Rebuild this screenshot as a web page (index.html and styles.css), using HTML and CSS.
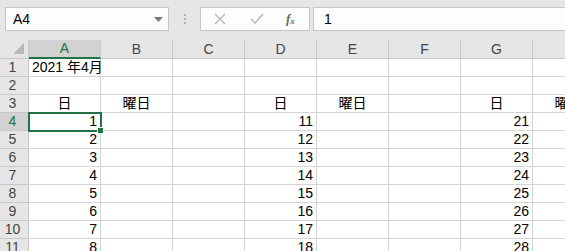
FILE: index.html
```html
<!DOCTYPE html>
<html lang="ja">
  <head>
    <meta charset="UTF-8" />
    <title>Book1 - Excel</title>
    <link rel="stylesheet" href="styles.css">
  </head>
  <body>
    <div class="formula-bar">
      <div class="name-box">
        <span>A4</span>
        <svg class="caret" width="9" height="5" viewBox="0 0 9 5"><path d="M0 0h9L4.5 5z" fill="#7a7a7a"/></svg>
      </div>
      <div class="grip"><i></i><i></i><i></i></div>
      <div class="fx-buttons">
        <svg width="12" height="12" viewBox="0 0 12 12"><path d="M1 1l10 10M11 1L1 11" stroke="#b4b4b4" stroke-width="1.3"/></svg>
        <svg width="14" height="12" viewBox="0 0 14 12"><path d="M1 6l4 4 8-9" stroke="#b4b4b4" stroke-width="1.4" fill="none"/></svg>
        <span class="fx">f<sub>x</sub></span>
      </div>
      <div class="formula-input">1</div>
    </div>

    <div class="sheet" id="sheet"></div>

    <script>
      var cols = ["A", "B", "C", "D", "E", "F", "G", "H"];
      var sheet = document.getElementById("sheet");
      var html = '<div class="corner"><span class="tri"></span></div>';
      cols.forEach(function (c) {
        // column H is scrolled past the window edge, its letter is not seen
        html += '<div class="col-head' + (c === "A" ? " sel" : "") + '">' + (c === "H" ? "" : c) + '</div>';
      });
      for (var r = 1; r <= 11; r++) {
        html += '<div class="row-head' + (r === 4 ? " sel" : "") + '">' + r + '</div>';
        cols.forEach(function (c) {
          var text = "", cls = "cell";
          if (r === 1 && c === "A") { text = "2021 年4月"; cls += " left"; }
          if (r === 3) {
            if (c === "A" || c === "D" || c === "G") { text = "日"; cls += " center"; }
            if (c === "B" || c === "E" || c === "H") { text = "曜日"; cls += " center"; }
          }
          if (r >= 4) {
            if (c === "A") text = r - 3;
            if (c === "D") text = r + 7;
            if (c === "G") text = r + 17;
            cls += " num";
          }
          if (r === 4 && c === "A") cls += " active";
          html += '<div class="' + cls + '">' + text + '</div>';
        });
      }
      sheet.innerHTML = html;
    </script>
  </body>
</html>
```

FILE: styles.css
```css
body {
  margin: 0;
  width: 565px;
  height: 251px;
  overflow: hidden;
  background: #ffffff;
  font-family: "Liberation Sans", "Noto Sans CJK JP", sans-serif;
}
.formula-bar {
  height: 40px;
  background: #e6e6e6;
  display: flex;
  align-items: flex-start;
  padding-top: 7px;
  box-sizing: border-box;
}
.name-box {
  margin-left: 5px;
  width: 164px;
  height: 24px;
  box-sizing: border-box;
  border: 1px solid #c6c6c6;
  background: #fdfdfd;
  display: flex;
  align-items: center;
  justify-content: space-between;
  padding: 0 5px 0 7px;
  font-size: 14px;
  color: #000;
}
.caret {
  margin-top: 1px;
}
.grip {
  width: 31px;
  height: 24px;
  display: flex;
  flex-direction: column;
  align-items: center;
  justify-content: center;
  gap: 2px;
}
.grip i {
  display: block;
  width: 2px;
  height: 2px;
  background: #b0b0b0;
}
.fx-buttons {
  width: 110px;
  height: 24px;
  box-sizing: border-box;
  border: 1px solid #c6c6c6;
  background: #fdfdfd;
  display: flex;
  align-items: center;
  padding: 0 14px 0 13px;
  gap: 24px;
}
.fx {
  font-family: "Liberation Serif", serif;
  font-style: italic;
  font-weight: bold;
  font-size: 13px;
  color: #6a6a6a;
  margin-left: -2px;
}
.fx sub {
  font-size: 9px;
  vertical-align: -1px;
}
.formula-input {
  margin-left: 3px;
  flex: 1;
  height: 24px;
  box-sizing: border-box;
  border: 1px solid #c6c6c6;
  border-right: none;
  background: #fdfdfd;
  padding-left: 10px;
  font-size: 14px;
  line-height: 22px;
}
.sheet {
  display: grid;
  grid-template-columns: 29px repeat(8, 72px);
  grid-template-rows: 19px repeat(11, 18px);
  font-size: 14px;
}
.corner,
.col-head,
.row-head {
  background: #e6e6e6;
  color: #444;
  box-sizing: border-box;
  border-right: 1px solid #c8c8c8;
  border-bottom: 1px solid #c8c8c8;
}
.corner {
  position: relative;
}
.tri {
  position: absolute;
  right: 4px;
  bottom: 4px;
  width: 0;
  height: 0;
  border-left: 11px solid transparent;
  border-bottom: 11px solid #b9b9b9;
}
.col-head {
  text-align: center;
  line-height: 18px;
}
.col-head.sel {
  background: #d2d2d2;
  color: #217346;
  border-bottom: 2px solid #217346;
  line-height: 17px;
}
.row-head {
  text-align: center;
  line-height: 17px;
  padding-right: 3px;
}
.row-head.sel {
  background: #d2d2d2;
  color: #217346;
}
.cell {
  box-sizing: border-box;
  border-right: 1px solid #d4d4d4;
  border-bottom: 1px solid #d4d4d4;
  line-height: 17px;
  white-space: nowrap;
  color: #000;
  padding: 0 3px;
}
.cell.left {
  text-align: left;
}
.cell.center {
  text-align: center;
}
.cell.num {
  text-align: right;
}
.cell.active {
  position: relative;
  outline: 2px solid #217346;
  outline-offset: -1px;
  z-index: 1;
}
.cell.active::after {
  content: "";
  position: absolute;
  right: -4px;
  bottom: -4px;
  width: 5px;
  height: 5px;
  background: #217346;
  border: 1px solid #fff;
}
```
